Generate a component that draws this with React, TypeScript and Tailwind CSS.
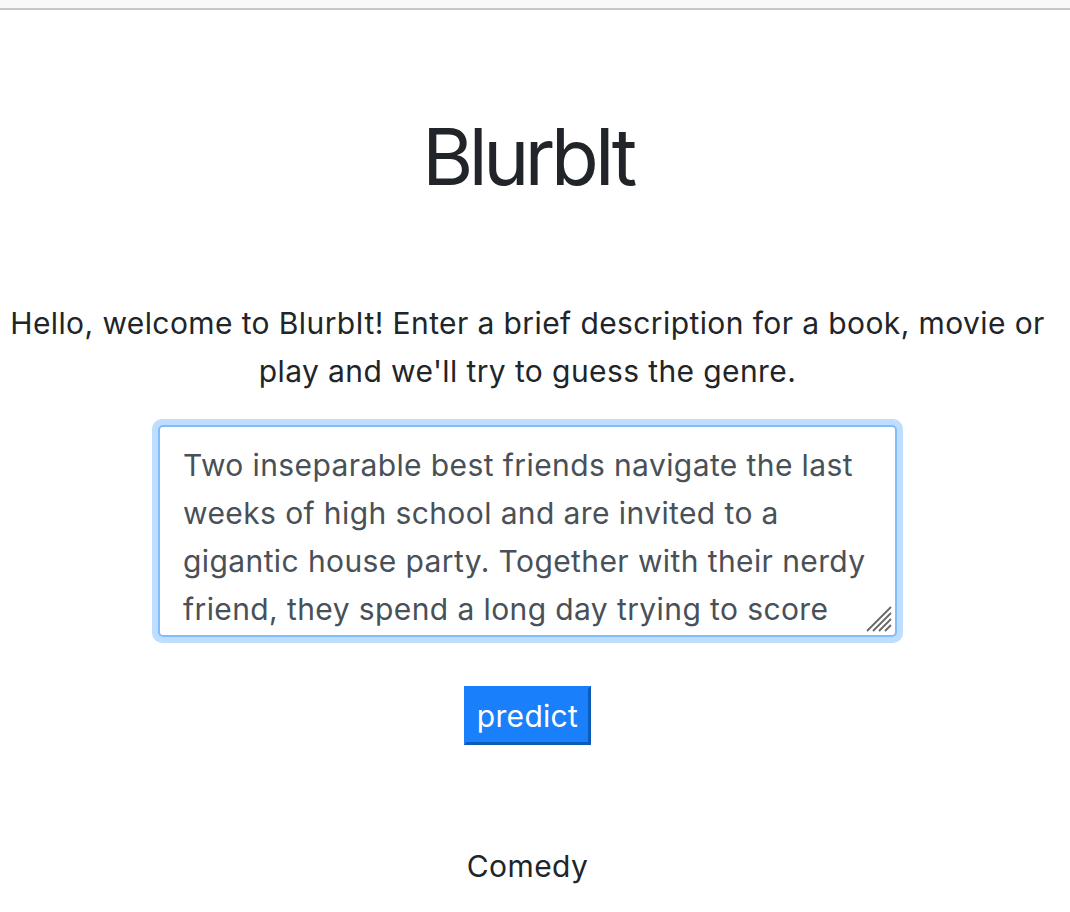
import { useState } from "react";

const BLURB =
  "Two inseparable best friends navigate the last weeks of high school and are invited to a gigantic house party. Together with their nerdy friend, they spend a long day trying to score alcohol for the party, hoping it will help them win over the girls they like before they go off to college.";

function ResizeGrip() {
  return (
    <svg
      className="absolute right-[5px] bottom-[5px] pointer-events-none"
      width="26"
      height="26"
      viewBox="0 0 26 26"
      stroke="#666666"
      strokeWidth="1.8"
    >
      <line x1="1" y1="25" x2="25" y2="1" />
      <line x1="7" y1="25" x2="25" y2="7" />
      <line x1="13" y1="25" x2="25" y2="13" />
      <line x1="19" y1="25" x2="25" y2="19" />
    </svg>
  );
}

export default function App() {
  const [text, setText] = useState(BLURB);

  return (
    <div className="min-h-screen bg-white text-[#212529] font-['Inter','Liberation_Sans',sans-serif]">
      {/* browser strip */}
      <div className="h-[8px] bg-[#f8f8fa] border-b-2 border-[#c8c8c8] box-content" />

      <main className="w-[1055px] flex flex-col items-center text-center">
        <h1 className="mt-[100px] text-[78px] leading-[1.2] font-normal tracking-[-4.5px]">BlurbIt</h1>

        <p className="mt-[95px] text-[30px] leading-[48px] tracking-[0.4px]">
          Hello, welcome to BlurbIt! Enter a brief description for a book, movie or
          <br />
          play and we'll try to guess the genre.
        </p>

        <div className="mt-[24px] rounded-[10px] p-[6px] bg-[#bfdeff]">
          <div className="relative">
            <textarea
              value={text}
              onChange={(e) => setText(e.target.value)}
              className="block w-[739px] h-[212px] rounded-[5px] border-2 border-[#80bdff] bg-white pl-[23px] pr-[20px] pt-[14px] pb-[10px] text-[30px] leading-[48px] tracking-[0.4px] text-[#495057] outline-none resize-none overflow-hidden"
            />
            <ResizeGrip />
          </div>
        </div>

        <button className="mt-[43px] h-[59px] px-[10px] pt-[2px] bg-[#1a7ffa] text-white text-[30px] tracking-[0.3px] border-[3px] border-t-[#1a7ffa] border-l-[#1a7ffa] border-r-[#0c5bb8] border-b-[#0c5bb8]">
          predict
        </button>

        <div className="mt-[97px] text-[30px] leading-[48px] tracking-[0.4px]">Comedy</div>
      </main>
    </div>
  );
}
